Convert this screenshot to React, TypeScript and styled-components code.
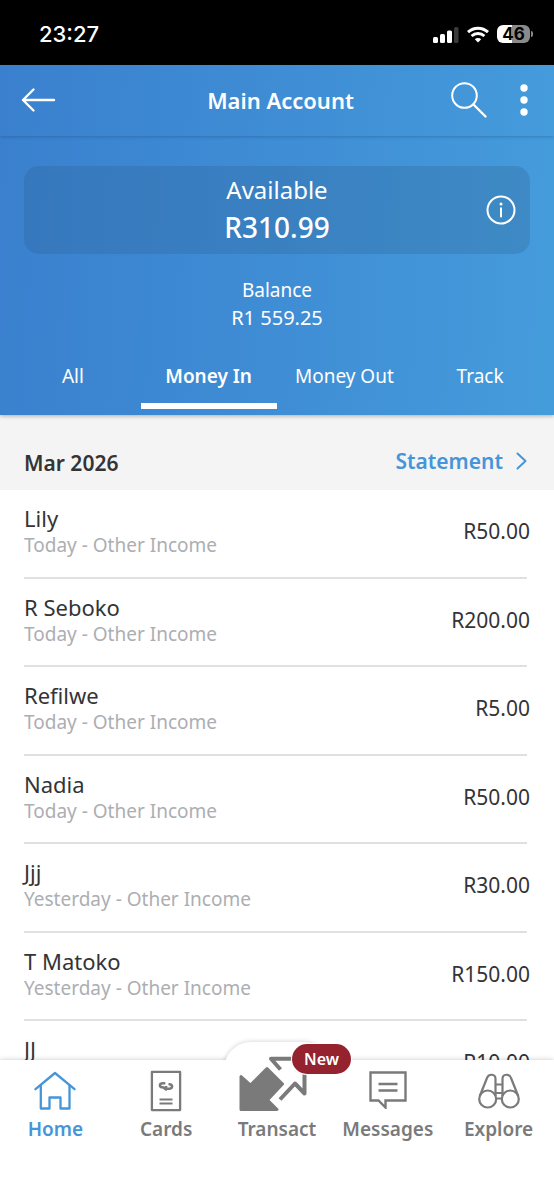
import React from 'react';
import styled, { createGlobalStyle } from 'styled-components';

const GlobalStyle = createGlobalStyle`
  *, *::before, *::after { box-sizing: border-box; }
  body {
    margin: 0;
    background: #ffffff;
    color: #333436;
    font-family: "Noto Sans", "Open Sans", sans-serif;
  }
  button {
    margin: 0;
    padding: 0;
    border: 0;
    background: none;
    color: inherit;
    font: inherit;
    cursor: pointer;
  }
  h1, h2, p, ul { margin: 0; padding: 0; }
  ul { list-style: none; }
  a { color: inherit; text-decoration: none; }
  svg { display: block; flex: none; }
`;

const Screen = styled.div`
  display: flex;
  flex-direction: column;
  height: 100vh;
  overflow: hidden;
`;

const StatusBar = styled.div`
  flex: none;
  display: flex;
  align-items: center;
  justify-content: space-between;
  height: 65px;
  padding: 3px 24px 0 39px;
  background: #000000;
  color: #ffffff;
`;

const Clock = styled.time`
  font: 500 22px/28px Inter, sans-serif;
`;

const StatusIcons = styled.div`
  display: flex;
  align-items: center;
  gap: 8px;
`;

const Battery = styled.span`
  position: relative;
  display: grid;
  place-items: center;
  width: 33px;
  height: 18px;
  border-radius: 6px;
  background: linear-gradient(90deg, #ffffff 46%, #8a8a8a 46%);
  color: #000000;
  font: 700 17px/18px Inter, sans-serif;

  &::after {
    content: "";
    position: absolute;
    right: -3px;
    top: 6px;
    width: 2px;
    height: 6px;
    border-radius: 0 2px 2px 0;
    background: #8a8a8a;
  }
`;

const Hero = styled.header`
  flex: none;
  position: relative;
  z-index: 1;
  background: linear-gradient(93deg, #3a80ce 0%, #3f8dd5 50%, #459cdb 100%);
  box-shadow: 0 1px 4px rgba(0, 0, 0, 0.3);
  color: #ffffff;
`;

const AppBar = styled.div`
  display: grid;
  grid-template-columns: 1fr auto 1fr;
  align-items: center;
  height: 71px;
  padding: 0 26px 2px 21px;
  box-shadow: 0 1px 3px rgba(20, 60, 110, 0.3);
`;

const BarStart = styled.div`
  display: flex;
`;

const Title = styled.h1`
  padding-left: 12px;
  font-size: 22px;
  font-weight: 600;
  line-height: 28px;
`;

const BarActions = styled.div`
  display: flex;
  align-items: center;
  justify-content: flex-end;
  gap: 33px;
`;

const AvailableCard = styled.section`
  position: relative;
  margin: 30px 24px 0;
  padding: 6px 0 8px;
  border-radius: 15px;
  background: rgba(45, 90, 135, 0.25);
  text-align: center;
`;

const AvailableLabel = styled.p`
  font-size: 24px;
  line-height: 36px;
`;

const AvailableAmount = styled.p`
  font-size: 28px;
  font-weight: 500;
  line-height: 38px;
`;

const InfoButton = styled.button`
  position: absolute;
  right: 14px;
  top: 29px;
`;

const Balance = styled.section`
  padding-top: 22px;
  text-align: center;
  font-size: 19px;
  font-weight: 400;
  line-height: 28px;
`;

const BalanceAmount = styled.p`
  font-size: 20px;
`;

const Tabs = styled.nav`
  display: grid;
  grid-template-columns: repeat(4, 1fr);
  margin-top: 17px;
  padding: 0 6px 6px 5px;
`;

const Tab = styled.button<{ $active?: boolean }>`
  height: 60px;
  border-bottom: 6px solid ${(p) => (p.$active ? '#ffffff' : 'transparent')};
  font-size: 19px;
  font-weight: ${(p) => (p.$active ? 600 : 400)};
  line-height: 28px;
  white-space: nowrap;
`;

const MonthBar = styled.div`
  flex: none;
  display: flex;
  align-items: center;
  justify-content: space-between;
  height: 75px;
  padding: 16px 27px 0 24px;
  background: #f4f4f4;
`;

const Month = styled.h2`
  padding-top: 4px;
  font-size: 21px;
  font-weight: 600;
  line-height: 28px;
`;

const StatementLink = styled.a`
  display: flex;
  align-items: center;
  gap: 13px;
  color: #4596d8;
  font-size: 21px;
  font-weight: 600;
  line-height: 28px;
`;

const Transactions = styled.ul`
  flex: 1 1 0;
  min-height: 0;
  overflow: hidden;
  padding: 0 27px 0 24px;
`;

const Transaction = styled.li`
  display: flex;
  align-items: center;
  justify-content: space-between;
  height: 89px;
  padding-bottom: 5px;
  border-bottom: 2px solid #e0e0e1;

  &:nth-child(even) {
    height: 88px;
  }
`;

const Party = styled.div`
  padding-top: 2px;
`;

const Payee = styled.p`
  font-size: 22px;
  line-height: 26px;
`;

const Detail = styled.p`
  color: #acaeb2;
  font-size: 19px;
  line-height: 28px;
`;

const Amount = styled.span`
  margin-right: -3px;
  font-size: 21px;
  line-height: 26px;
`;

const BottomNav = styled.nav`
  flex: none;
  position: relative;
  height: 139px;
  background: #ffffff;
  box-shadow: 0 0 5px rgba(0, 0, 0, 0.22);
`;

const NavBump = styled.div`
  position: absolute;
  left: 50%;
  top: -18px;
  width: 106px;
  height: 60px;
  margin-left: -53px;
  border-radius: 27px 27px 0 0;
  background: #ffffff;
  box-shadow: 0 0 5px rgba(0, 0, 0, 0.2);
  clip-path: inset(-8px -8px 42px -8px);
`;

const NavItems = styled.div`
  position: relative;
  display: grid;
  grid-template-columns: repeat(5, 1fr);
  background: #ffffff;
`;

const NavItem = styled.a<{ $active?: boolean }>`
  position: relative;
  display: flex;
  flex-direction: column;
  align-items: center;
  gap: 3px;
  color: ${(p) => (p.$active ? '#4596d8' : '#7a7a7b')};
  font-size: 19px;
  font-weight: 600;
  line-height: 28px;
`;

const NavIcon = styled.span<{ $drop: number }>`
  display: flex;
  flex-direction: column;
  align-items: center;
  justify-content: flex-end;
  height: 52px;
  padding-bottom: ${(p) => p.$drop}px;
`;

const Badge = styled.span`
  position: absolute;
  left: 50%;
  bottom: 69px;
  width: 59px;
  height: 30px;
  margin-left: 15px;
  border-radius: 15px;
  background: #94222f;
  box-shadow: 0 0 0 1px #ffffff;
  color: #ffffff;
  text-align: center;
  font-size: 16px;
  line-height: 30px;
`;

const Signal = () => (
  <svg width="26" height="17" viewBox="0 0 26 17" aria-label="Signal">
    <rect x="0" y="11" width="5" height="6" rx="1.5" fill="#fff" />
    <rect x="7" y="8" width="5" height="9" rx="1.5" fill="#fff" />
    <rect x="14" y="4.500" width="5" height="12.500" rx="1.500" fill="#fff" />
    <rect x="21" y="1" width="4.500" height="16" rx="1.500" fill="#3a3a3a" />
  </svg>
);

const Wifi = () => (
  <svg width="22" height="17" viewBox="0 0 22 17" fill="none" stroke="#fff" strokeWidth="3" aria-label="Wi-Fi">
    <path d="M1 6.200C6.700 .9 15.300 .9 21 6.200" />
    <path d="M4.600 10C8.300 6.600 13.700 6.600 17.400 10" />
    <path d="M11 16.500 7.800 13.200C9.500 11.600 12.500 11.600 14.200 13.200Z" fill="#fff" stroke="none" />
  </svg>
);

const BackIcon = () => (
  <svg width="36" height="26" viewBox="0 0 36 26" fill="none" stroke="#fff" strokeWidth="2.400" strokeLinecap="round" strokeLinejoin="round">
    <path d="M33 13H2M12.500 2.500 2 13l10.500 10.500" />
  </svg>
);

const SearchIcon = () => (
  <svg width="36" height="36" viewBox="0 0 36 36" fill="none" stroke="#fff" strokeWidth="2" strokeLinecap="round">
    <circle cx="13.500" cy="13.500" r="12.300" />
    <path d="M22.500 22.500 34.500 34.500" strokeWidth="2.300" />
  </svg>
);

const MoreIcon = () => (
  <svg width="8" height="34" viewBox="0 0 8 34" fill="#fff">
    <circle cx="4" cy="5" r="3.700" />
    <circle cx="4" cy="17" r="3.700" />
    <circle cx="4" cy="29" r="3.700" />
  </svg>
);

const InfoIcon = () => (
  <svg width="30" height="30" viewBox="0 0 30 30" fill="none" stroke="#fff" strokeWidth="2">
    <circle cx="15" cy="15" r="13.500" />
    <path d="M15 13.300V21.500" strokeLinecap="round" />
    <circle cx="15" cy="9" r="1.500" fill="#fff" stroke="none" />
  </svg>
);

const Chevron = () => (
  <svg width="11" height="18" viewBox="0 0 11 18" fill="none" stroke="currentColor" strokeWidth="2" strokeLinecap="round" strokeLinejoin="round">
    <path d="M1.500 1.500 9.500 9 1.500 16.500" />
  </svg>
);

const HomeIcon = () => (
  <svg width="42" height="40" viewBox="0 0 42 40" fill="none" stroke="currentColor" strokeWidth="2.300" strokeLinejoin="round" strokeLinecap="round">
    <path d="M1.500 18.200 21 2 40.500 18.200" />
    <path d="M6.800 14.500V37.500H15.500V26.500H26.500V37.500H35.500V14.500" />
  </svg>
);

const CardsIcon = () => (
  <svg width="32" height="42" viewBox="0 0 32 42" fill="none" stroke="currentColor" strokeWidth="2.300" strokeLinejoin="round">
    <rect x="1.900" y="1.900" width="28.200" height="38.200" />
    <path d="M9.500 29.400H22.500M9.500 33.600H22.500" strokeWidth="2" />
    <path d="M15.300 13.300H13C9 13.300 9 17.300 12.500 17.300H13L16 19.500V16" strokeWidth="2.600" />
    <path d="M16.700 18.700H19C23 18.700 23 14.300 19.500 14.300H18.500" strokeWidth="2.600" />
  </svg>
);

const TransactIcon = () => (
  <svg width="76" height="58" viewBox="0 0 76 58" fill="none" stroke="currentColor" strokeWidth="4" strokeLinejoin="round">
    <path d="M2 22.500 11.500 31 28 14.500 43.500 30 28.500 46 38 55.500H2Z" fill="currentColor" strokeWidth="3" />
    <path d="M54 4.700H32L41.500 15.500" />
    <path d="M65.500 19V39.500L56 29.500 41 45.500" />
  </svg>
);

const MessagesIcon = () => (
  <svg width="38" height="38" viewBox="0 0 38 38" fill="none" stroke="currentColor" strokeWidth="2.400">
    <path d="M1.500 1.500H36.500V29.500H16.500V36.500L9.500 29.500H1.500Z" />
    <path d="M9.500 13H28.500M9.500 19.500H28.500" />
  </svg>
);

const ExploreIcon = () => (
  <svg width="42" height="36" viewBox="0 0 42 36" fill="none" stroke="currentColor" strokeWidth="2.200">
    <circle cx="9.700" cy="26" r="8.500" />
    <circle cx="32.300" cy="26" r="8.500" />
    <path d="M1.800 23 9 5C10.500 .5 17.500 .5 17.500 6V23" />
    <path d="M40.200 23 33 5C31.500 .5 24.500 .5 24.500 6V23" />
    <path d="M17.500 11.500H24.500M17.500 20H24.500M18 25.500H24" />
  </svg>
);

const transactions = [
  { payee: 'Lily', detail: 'Today - Other Income', amount: 'R50.00' },
  { payee: 'R Seboko', detail: 'Today - Other Income', amount: 'R200.00' },
  { payee: 'Refilwe', detail: 'Today - Other Income', amount: 'R5.00' },
  { payee: 'Nadia', detail: 'Today - Other Income', amount: 'R50.00' },
  { payee: 'Jjj', detail: 'Yesterday - Other Income', amount: 'R30.00' },
  { payee: 'T Matoko', detail: 'Yesterday - Other Income', amount: 'R150.00' },
  { payee: 'JJ', detail: 'Yesterday - Other Income', amount: 'R10.00' },
];

const tabs = ['All', 'Money In', 'Money Out', 'Track'];

const navItems = [
  { label: 'Home', icon: <HomeIcon />, drop: 1 },
  { label: 'Cards', icon: <CardsIcon />, drop: 0 },
  { label: 'Transact', icon: <TransactIcon />, drop: 0, badge: 'New' },
  { label: 'Messages', icon: <MessagesIcon />, drop: 3 },
  { label: 'Explore', icon: <ExploreIcon />, drop: 3 },
];

export default function App() {
  const [activeTab, setActiveTab] = React.useState('Money In');

  return (
    <Screen>
      <GlobalStyle />
      <StatusBar>
        <Clock>23:27</Clock>
        <StatusIcons>
          <Signal />
          <Wifi />
          <Battery>46</Battery>
        </StatusIcons>
      </StatusBar>

      <Hero>
        <AppBar>
          <BarStart>
            <button aria-label="Back"><BackIcon /></button>
          </BarStart>
          <Title>Main Account</Title>
          <BarActions>
            <button aria-label="Search"><SearchIcon /></button>
            <button aria-label="More options"><MoreIcon /></button>
          </BarActions>
        </AppBar>
        <AvailableCard>
          <AvailableLabel>Available</AvailableLabel>
          <AvailableAmount>R310.99</AvailableAmount>
          <InfoButton aria-label="About available balance"><InfoIcon /></InfoButton>
        </AvailableCard>
        <Balance>
          <p>Balance</p>
          <BalanceAmount>R1 559.25</BalanceAmount>
        </Balance>
        <Tabs>
          {tabs.map((tab) => (
            <Tab key={tab} $active={tab === activeTab} onClick={() => setActiveTab(tab)}>
              {tab}
            </Tab>
          ))}
        </Tabs>
      </Hero>

      <MonthBar>
        <Month>Mar 2026</Month>
        <StatementLink href="#statement">
          Statement
          <Chevron />
        </StatementLink>
      </MonthBar>

      <Transactions>
        {transactions.map((t) => (
          <Transaction key={t.payee}>
            <Party>
              <Payee>{t.payee}</Payee>
              <Detail>{t.detail}</Detail>
            </Party>
            <Amount>{t.amount}</Amount>
          </Transaction>
        ))}
      </Transactions>

      <BottomNav>
        <NavBump />
        <NavItems>
          {navItems.map((item) => (
            <NavItem key={item.label} href={`#${item.label.toLowerCase()}`} $active={item.label === 'Home'}>
              <NavIcon $drop={item.drop}>{item.icon}</NavIcon>
              {item.label}
              {item.badge && <Badge>{item.badge}</Badge>}
            </NavItem>
          ))}
        </NavItems>
      </BottomNav>
    </Screen>
  );
}
